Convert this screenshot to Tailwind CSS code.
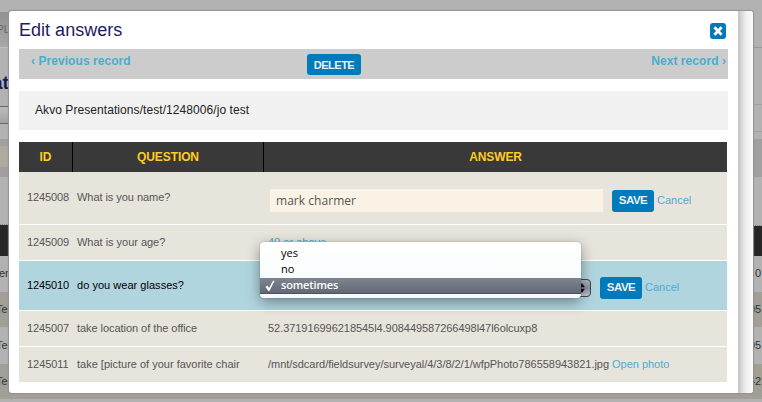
<!DOCTYPE html>
<html lang="en">
<head>
<meta charset="utf-8">
<title>Edit answers</title>
<script src="https://cdn.jsdelivr.net/npm/@tailwindcss/browser@4"></script>
</head>
<body class="relative h-[402px] w-[762px] overflow-hidden bg-[#b2b2b2] font-['Liberation_Sans',Arial,sans-serif] text-[11px] text-[#555]">
<!-- dimmed page underneath the dialog -->
<div class="flex h-[402px] justify-between overflow-hidden whitespace-nowrap text-[11px] leading-[13px] text-[#333]" aria-hidden="true">
  <div class="flex w-[9px] flex-col overflow-hidden">
    <div class="h-3 shrink-0"></div>
    <div class="flex h-[35px] shrink-0 items-center bg-linear-to-b from-[#929292] to-[#a8a8a8] text-[10px] text-[#666]"><span class="-ml-[3px]">PL</span></div>
    <div class="h-px shrink-0 bg-[#c0c0c0]"></div>
    <div class="h-[58px] shrink-0 pt-[24px] text-[19px] leading-[22px] font-bold text-[#1b1a55]"><span class="-ml-[8px]">at</span></div>
    <div class="h-[18px] shrink-0 border-y border-[#666] bg-linear-to-b from-[#bbb] to-[#a3a3a3]"></div>
    <div class="h-[15px] shrink-0"></div>
    <div class="h-[38px] shrink-0 border-y-[7px] border-b-[10px] border-[#a0a0a0] bg-[#aeaa9d]"></div>
    <div class="h-[48px] shrink-0 border-b border-dotted border-[#888]"></div>
    <div class="h-[31px] shrink-0 bg-[#272727]"></div>
    <div class="h-[36px] shrink-0 pt-[11px]"><span class="-ml-px">er</span></div>
    <div class="h-[35px] shrink-0 bg-[#a29f97] pt-[11px]"><span class="-ml-[4px]">Te</span></div>
    <div class="h-[37px] shrink-0 pt-[12px]"><span class="-ml-[4px]">Te</span></div>
    <div class="h-[35px] shrink-0 bg-[#a29f97] pt-[11px]"><span class="-ml-[4px]">Te</span></div>
  </div>
  <div class="flex w-[9px] flex-col overflow-hidden">
    <div class="h-12 shrink-0 border-b border-[#999]"></div>
    <div class="h-[57px] shrink-0 border-b border-[#a3a3a3]"></div>
    <div class="h-[27px] shrink-0 border-b border-[#a3a3a3]"></div>
    <div class="h-[7px] shrink-0"></div>
    <div class="h-[38px] shrink-0 bg-[#a0a0a0]"></div>
    <div class="h-[49px] shrink-0 border-b border-dotted border-[#888]"></div>
    <div class="h-[30px] shrink-0 bg-[#272727]"></div>
    <div class="h-[36px] shrink-0 pt-[11px] pl-[2px]">0</div>
    <div class="h-[35px] shrink-0 bg-[#a29f97] pt-[11px]"><span class="-ml-[4px]">05</span></div>
    <div class="h-[37px] shrink-0 pt-[12px]"><span class="-ml-[4px]">05</span></div>
    <div class="h-[35px] shrink-0 bg-[#a29f97] pt-[11px]"><span class="-ml-[4px]">42</span></div>
  </div>
</div>
<div class="absolute top-[393px] left-0 h-[6px] w-[762px] bg-[#a29f97]"></div>

<!-- dialog -->
<div class="absolute top-[11px] left-[9px] flex h-[382px] w-[744px] overflow-hidden rounded-[3px] bg-white shadow-[0_0_1px_1px_#929292]">
  <div class="flex w-[729px] flex-col pl-[10px] whitespace-nowrap">
    <div class="flex h-[38px] items-center justify-between pr-[12px]">
      <h1 class="text-[18px] leading-5 tracking-[0.02px] text-[#211c62]">Edit answers</h1>
      <button class="mt-px flex size-4 items-center justify-center rounded-[3px] bg-[#007ab8]" aria-label="Close">
        <svg class="size-4" viewBox="0 0 16 16" fill="none" stroke="#fff" stroke-width="2.8"><path d="M4.4 4.2 11.6 11.8M11.6 4.2 4.4 11.8"/></svg>
      </button>
    </div>
    <div class="flex h-[30px] w-[709px] bg-[#ccc] pr-[2px] text-[12px] leading-[14px] font-bold text-[#48aecf]">
      <span class="w-[288px] pt-[5px] pl-[12px] tracking-[0.06px]">‹ Previous record</span>
      <button class="mt-[5px] h-[21px] w-[54px] rounded-[3px] bg-[#007ab8] text-[11px] leading-[22px] tracking-[-0.5px] text-[#eee]">DELETE</button>
      <span class="ml-auto pt-[5px] tracking-[0.06px]">Next record ›</span>
    </div>
    <div class="mt-3 h-[39px] w-[709px] bg-[#f1f1f1] pt-[12px] pl-4 text-[12px] leading-[14px] tracking-[0.07px] text-[#222]">Akvo Presentations/test/1248006/jo test</div>
    <div class="mt-3 grid h-[30px] w-[708px] grid-cols-[54px_191px_463px] bg-[#393939] text-center text-[12px] leading-[30px] font-bold tracking-[-0.1px] text-[#fc2]">
      <div class="border-r border-black">ID</div><div class="border-r border-black">QUESTION</div><div>ANSWER</div>
    </div>
    <div class="grid h-[53px] w-[708px] grid-cols-[58px_191px_459px] items-center border-b border-white bg-[#e7e4dc]">
      <span class="-mt-px pl-[8px] tracking-[-0.1px]">1245008</span><span class="-mt-px tracking-[-0.05px]">What is you name?</span>
      <div class="flex items-center pt-[5px] pl-[2px]"><div class="h-[23px] w-[333px] bg-[#faf3e5] pl-[6px] font-['Open_Sans',sans-serif] text-[12px] leading-[23px] font-medium tracking-[0.04px]">mark charmer</div><button class="ml-[9px] h-[22px] w-[42px] rounded-[3px] bg-[#007ab8] text-[11.5px] font-bold tracking-[-0.5px] text-[#eee]">SAVE</button><a class="ml-[3px] text-[#48aecf]">Cancel</a></div>
    </div>
    <div class="grid h-[36px] w-[708px] grid-cols-[58px_191px_459px] items-center border-b border-white bg-[#e7e4dc]">
      <span class="pl-[8px] tracking-[-0.1px]">1245009</span><span class="tracking-[-0.02px]">What is your age?</span><a class="text-[#48aecf]">40 or above</a>
    </div>
    <div class="grid h-[50px] w-[708px] grid-cols-[58px_191px_459px] items-center border-b border-white bg-[#b1d5df] text-black">
      <span class="pl-[8px] tracking-[-0.1px]">1245010</span><span class="tracking-[0.03px]">do you wear glasses?</span>
      <div class="flex items-center pt-[4px]"><div class="flex h-[18px] w-[323px] items-center justify-end rounded-[4px] border border-[#414453] bg-linear-to-b from-[#b5bac5] via-[#8c91a1] to-[#c5cad3] pr-[5px]"><svg class="h-[10px] w-[6px]" viewBox="0 0 7 12" fill="#151515"><path d="M0 5 3.5 0 7 5ZM0 7 3.5 12 7 7Z"/></svg></div><button class="ml-[9px] h-[22px] w-[42px] rounded-[3px] bg-[#007ab8] text-[11.5px] font-bold tracking-[-0.5px] text-[#eee]">SAVE</button><a class="ml-[3px] text-[#48aecf]">Cancel</a></div>
    </div>
    <div class="grid h-[36px] w-[708px] grid-cols-[58px_191px_459px] items-center border-b border-white bg-[#e7e4dc]">
      <span class="pl-[8px] tracking-[-0.1px]">1245007</span><span class="tracking-[-0.05px]">take location of the office</span><span class="tracking-[-0.05px]">52.371916996218545l4.908449587266498l47l6olcuxp8</span>
    </div>
    <div class="grid h-[35px] w-[708px] grid-cols-[58px_191px_459px] items-center bg-[#e7e4dc]">
      <span class="pl-[8px] tracking-[-0.05px]">1245011</span><span>take [picture of your favorite chair</span><span class="tracking-[-0.03px]">/mnt/sdcard/fieldsurvey/surveyal/4/3/8/2/1/wfpPhoto786558943821.jpg <a class="text-[#48aecf]">Open photo</a></span>
    </div>
  </div>
  <div class="w-[15px] bg-linear-to-r from-[#c3c3c3] via-[#eee] to-[#fcfcfc]"></div>
</div>

<!-- open select menu -->
<div class="absolute top-[242px] left-[260px] h-[56px] w-[321px] rounded-[4px] bg-linear-to-b from-[#fffffe] to-[#f5fafd] pt-[4px] font-['Open_Sans',sans-serif] text-[11px] leading-[14px] font-medium text-black shadow-[0_4px_14px_rgba(0,0,0,0.4),0_0_1px_rgba(0,0,0,0.6)]">
  <div class="h-4 pl-[21px]">yes</div>
  <div class="h-4 pl-[21px]">no</div>
  <div class="flex h-4 items-start border-b border-[#4c535e] bg-linear-to-b from-[#7e858f] to-[#626975] pl-[5px] font-semibold tracking-[-0.15px] text-white"><svg class="mt-[2px] mr-[5px] h-[12px] w-[11px]" viewBox="0 0 11 12" fill="#fff"><path d="M0.5 7 2.4 5.6 4 8 8 .8 9.6 .8 4.4 11 3.4 11Z"/></svg>sometimes</div>
</div>
</body>
</html>
